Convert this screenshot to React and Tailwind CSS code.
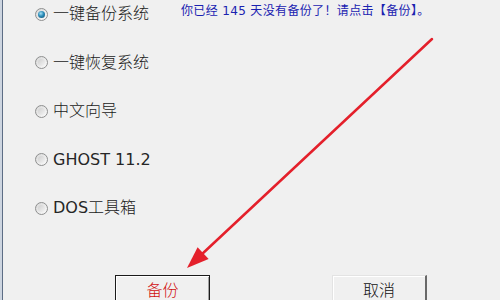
import React from "react";

function Radio({ checked }) {
  return (
    <span className="relative flex h-[13px] w-[13px] shrink-0 items-center justify-center rounded-full border border-[#8e8f8f] bg-gradient-to-br from-[#d8d8d8] to-[#fbfbfb]">
      {checked ? (
        <span className="h-[7px] w-[7px] rounded-full bg-[radial-gradient(circle_at_40%_35%,#a6e0f5_0%,#2b8cb8_45%,#0e4a6a_100%)]" />
      ) : (
        <span className="h-[7px] w-[7px] rounded-full bg-gradient-to-br from-[#cfcfcf] to-[#f4f4f4]" />
      )}
    </span>
  );
}

const items = [
  { parts: [["一键备份系统", true]], checked: true },
  { parts: [["一键恢复系统", true]] },
  { parts: [["中文向导", true]] },
  { parts: [["GHOST 11.2", false]] },
  { parts: [["DOS", false], ["工具箱", true]] },
];

export default function App() {
  return (
    <div
      className="relative flex h-[300px] w-[500px] overflow-hidden bg-[#f0f0f0]"
      style={{ fontFamily: '"DejaVu Sans", "Noto Sans CJK SC", sans-serif' }}
    >
      <div className="w-[2px] shrink-0 bg-[#cdd5e0]" />
      <div className="w-[1px] shrink-0 bg-[#5d6d85]" />
      <div className="flex flex-1 flex-col">
        <div className="flex flex-col gap-[28.5px] pl-[32px] pt-[4px]">
          {items.map((it, i) => (
            <div key={i} className="flex h-[20px] items-center">
              <Radio checked={it.checked} />
              <span className="ml-[5px] text-[16px] leading-[20px] text-[#262626]">
                {it.parts.map(([t, light], j) =>
                  light ? (
                    <span key={j} className="font-light text-[#1a1a1a]">{t}</span>
                  ) : (
                    <span key={j} className="font-normal">{t}</span>
                  )
                )}
              </span>
              {i === 0 && (
                <span className="-mt-[6px] ml-[32px] text-[12px] leading-[16px] tracking-[0.35px] text-[#1a22b0]">
                  你已经 145 天没有备份了！请点击【备份】。
                </span>
              )}
            </div>
          ))}
        </div>
        <div className="mt-[57px] flex pl-[112px]">
          <button className="flex h-[34px] w-[95px] items-start justify-center border border-[#1a1a1a] bg-[#f0f0f0] pt-[4px] text-[16px] font-light leading-[22px] text-[#d11010] shadow-[inset_1px_1px_0_#ffffff,inset_-1px_-1px_0_#a0a0a0]">
            备份
          </button>
          <button className="ml-[122px] flex h-[34px] w-[95px] items-start justify-center border-l border-t border-r-2 border-l-[#e3e3e3] border-t-[#e3e3e3] border-r-[#696969] bg-[#f0f0f0] pt-[4px] text-[16px] font-light leading-[22px] text-[#111] shadow-[inset_1px_1px_0_#ffffff]">
            取消
          </button>
        </div>
      </div>
      <svg
        className="pointer-events-none absolute left-0 top-0"
        width="500"
        height="300"
        viewBox="0 0 500 300"
      >
        <line
          x1="432"
          y1="39"
          x2="201"
          y2="255"
          stroke="#e4202b"
          strokeWidth="2.5"
          strokeLinecap="round"
        />
        <polygon points="187,268 208.6,258.9 197.6,247.2" fill="#e4202b" />
      </svg>
    </div>
  );
}
